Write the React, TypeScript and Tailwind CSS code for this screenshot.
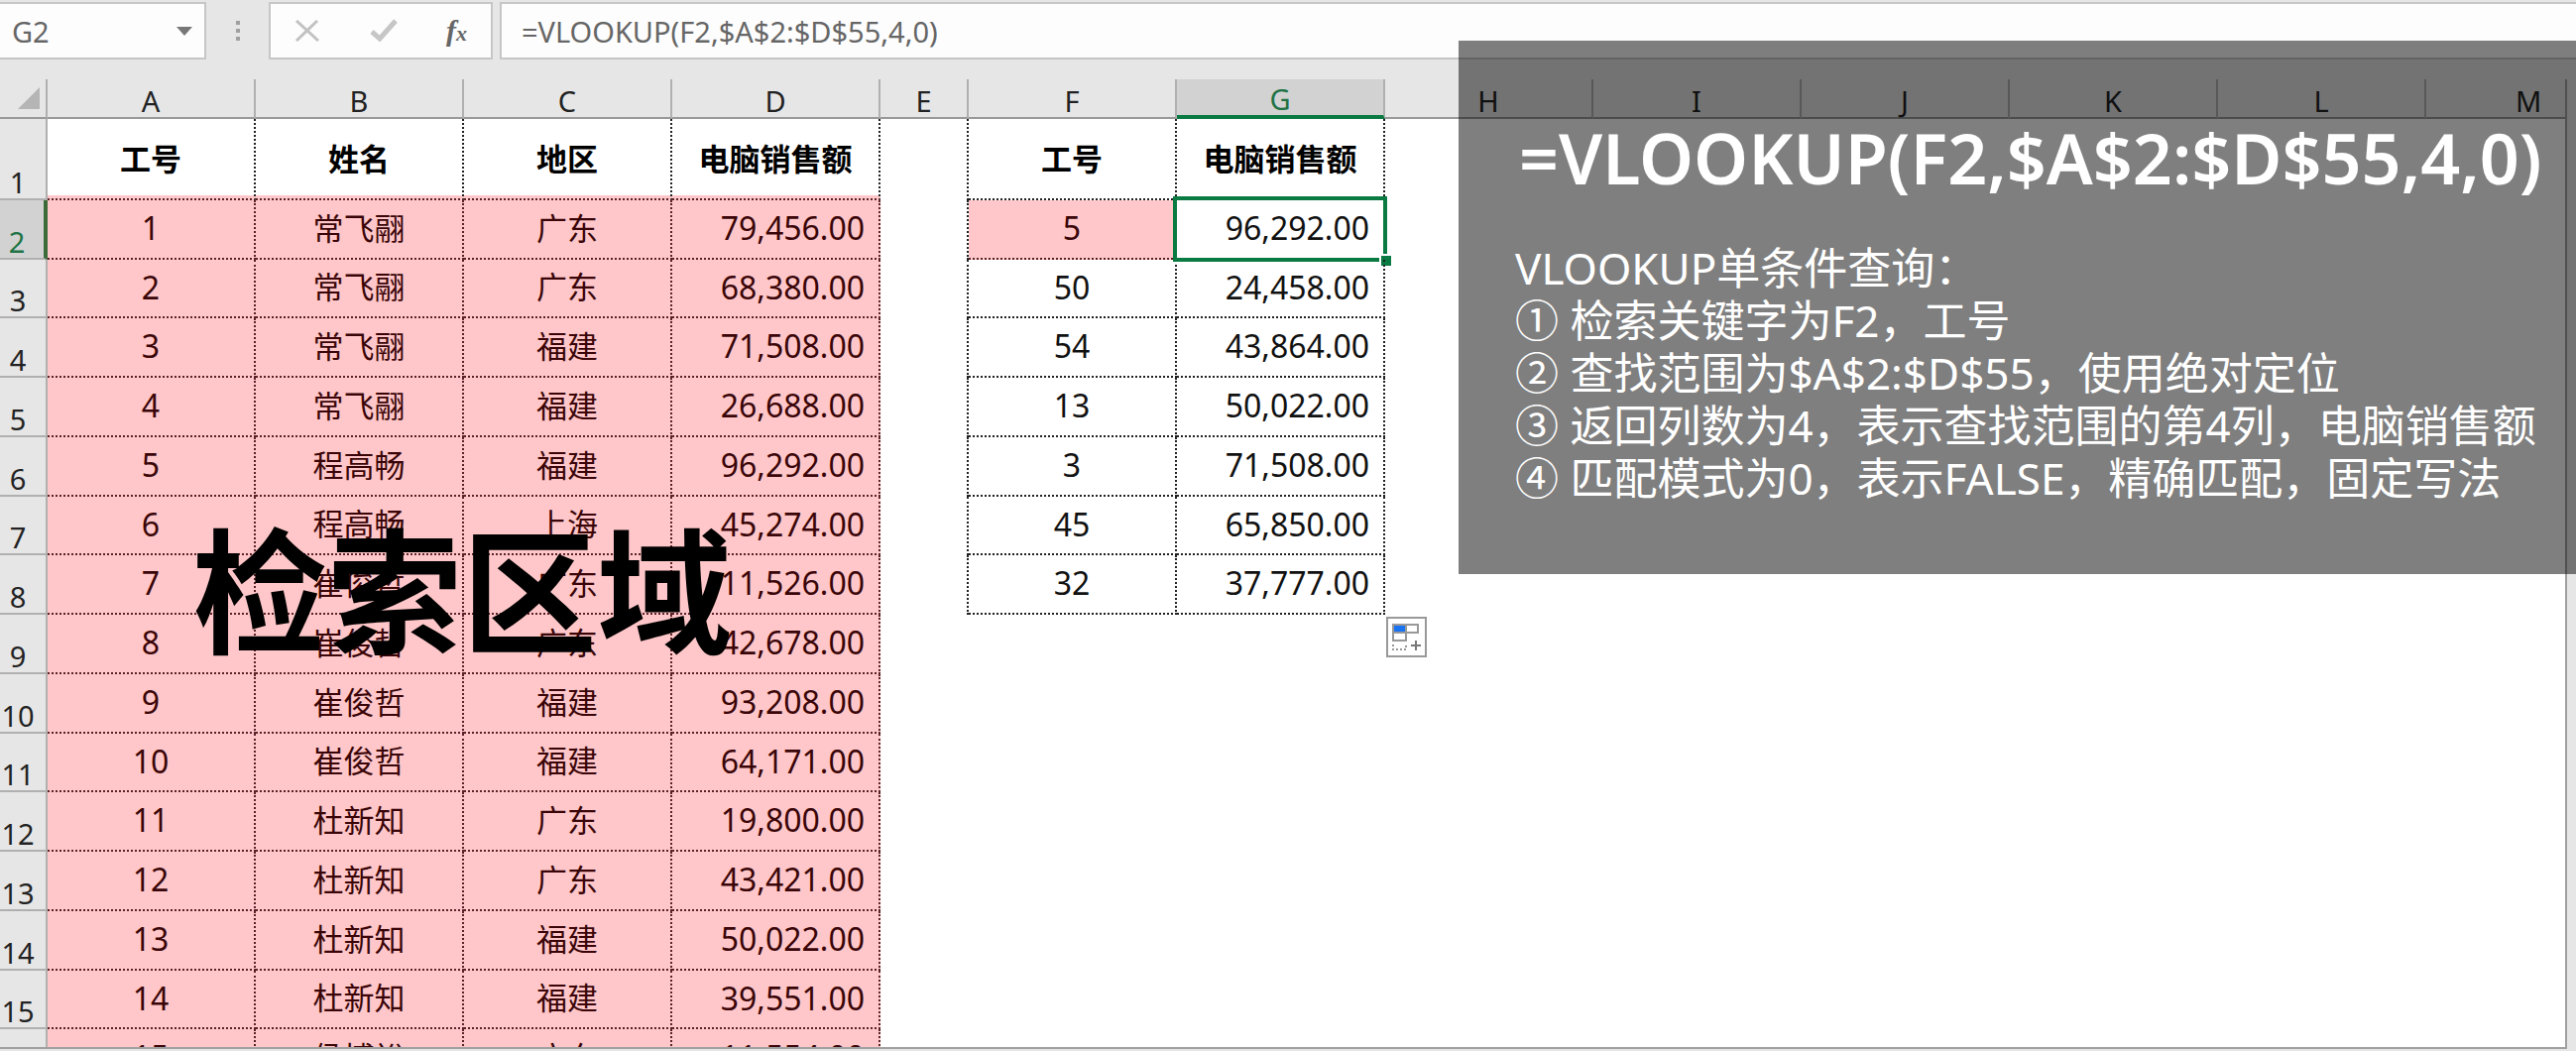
import React from "react";

type Row = { id: string; name: string; area: string; amount: string; key?: string; result?: string };

const rows: Row[] = [
  { id: "1", name: "常飞翮", area: "广东", amount: "79,456.00", key: "5", result: "96,292.00" },
  { id: "2", name: "常飞翮", area: "广东", amount: "68,380.00", key: "50", result: "24,458.00" },
  { id: "3", name: "常飞翮", area: "福建", amount: "71,508.00", key: "54", result: "43,864.00" },
  { id: "4", name: "常飞翮", area: "福建", amount: "26,688.00", key: "13", result: "50,022.00" },
  { id: "5", name: "程高畅", area: "福建", amount: "96,292.00", key: "3", result: "71,508.00" },
  { id: "6", name: "程高畅", area: "上海", amount: "45,274.00", key: "45", result: "65,850.00" },
  { id: "7", name: "崔俊哲", area: "广东", amount: "11,526.00", key: "32", result: "37,777.00" },
  { id: "8", name: "崔俊哲", area: "广东", amount: "42,678.00" },
  { id: "9", name: "崔俊哲", area: "福建", amount: "93,208.00" },
  { id: "10", name: "崔俊哲", area: "福建", amount: "64,171.00" },
  { id: "11", name: "杜新知", area: "广东", amount: "19,800.00" },
  { id: "12", name: "杜新知", area: "广东", amount: "43,421.00" },
  { id: "13", name: "杜新知", area: "福建", amount: "50,022.00" },
  { id: "14", name: "杜新知", area: "福建", amount: "39,551.00" },
  { id: "15", name: "侯博裕", area: "广东", amount: "11,554.00" },
];

const columns = ["A", "B", "C", "D", "E", "F", "G", "H", "I", "J", "K", "L"];

const dotRight = "border-r-2 border-dotted border-r-[#222]";
const pink = "bg-[#ffc7c9] text-[#3a0508]";
const pinkCell = "border-r-2 border-b-2 border-dotted border-[#5a2226] p-0 pb-[2px] text-center";
const plainCell = "border-r-2 border-b-2 border-dotted border-[#222] p-0 pb-[2px] text-center text-[#111]";

function FormulaBar() {
  return (
    <div className="flex h-[60px] items-stretch pt-[2px]">
      <div className="flex w-[208px] items-center border-2 border-l-0 border-[#c6c6c6] bg-[#fdfdfd] pr-3 pl-3">
        <input
          aria-label="Name box"
          defaultValue="G2"
          className="w-full min-w-0 bg-transparent text-[29px] leading-none text-[#666] outline-none"
        />
        <svg width="16" height="9" viewBox="0 0 16 9" className="shrink-0">
          <path d="M0 0H16L8 9Z" fill="#777" />
        </svg>
      </div>
      <div className="flex w-[63px] items-center justify-center">
        <svg width="4" height="21" viewBox="0 0 4 21" fill="#a0a0a0">
          <rect width="4" height="4" />
          <rect y="8" width="4" height="4" />
          <rect y="16" width="4" height="4" />
        </svg>
      </div>
      <div className="flex w-[226px] items-center justify-between border-2 border-[#c6c6c6] bg-[#fdfdfd] px-6">
        <button aria-label="Cancel">
          <svg width="26" height="22" viewBox="0 0 26 22" fill="none" stroke="#c2c2c2" strokeWidth="3">
            <path d="M2 1L24 21M23 1L2 21" />
          </svg>
        </button>
        <button aria-label="Enter">
          <svg width="28" height="24" viewBox="0 0 28 24" fill="none" stroke="#c6c6c6" strokeWidth="5">
            <path d="M2 13L10 20L26 2" />
          </svg>
        </button>
        <button
          aria-label="Insert function"
          className="font-['Liberation_Serif',serif] text-[30px] leading-none font-bold text-[#666] italic"
        >
          f<span className="text-[22px]">x</span>
        </button>
      </div>
      <div className="ml-[7px] flex min-w-0 flex-1 items-center border-2 border-r-0 border-[#c6c6c6] bg-[#fdfdfd] pl-5">
        <input
          aria-label="Formula"
          defaultValue="=VLOOKUP(F2,$A$2:$D$55,4,0)"
          className="w-full bg-transparent text-[29px] leading-none text-[#666] outline-none"
        />
      </div>
    </div>
  );
}

function Sheet() {
  return (
    <table className="w-full table-fixed border-separate border-spacing-0 bg-white">
      <colgroup>
        <col className="w-[48px]" />
        {columns.map((c) => (
          <col key={c} className={c === "E" ? "w-[89px]" : "w-[210px]"} />
        ))}
        <col />
      </colgroup>
      <thead>
        <tr className="h-[40px] bg-[#e6e6e6] text-[29px] leading-[33px] text-[#222]">
          <th className="border-r-2 border-b-2 border-r-[#b0b0b0] border-b-[#999] p-0">
            <svg width="22" height="22" viewBox="0 0 22 22" className="mr-[6px] ml-auto">
              <path d="M22 0V22H0Z" fill="#b5b5b5" />
            </svg>
          </th>
          {columns.map((c) => (
            <th
              key={c}
              className={
                c === "G"
                  ? "border-r-2 border-b-4 border-r-[#b0b0b0] border-b-[#0a7a43] bg-[#d2d2d2] p-0 pt-[2px] font-normal text-[#217346]"
                  : "border-r-2 border-b-2 border-r-[#b0b0b0] border-b-[#999] p-0 pt-1 font-normal"
              }
            >
              {c}
            </th>
          ))}
          <th className="border-b-2 border-b-[#999] p-0 pt-1 pl-[90px] text-left font-normal">M</th>
        </tr>
      </thead>
      <tbody className="text-[32px]">
        <tr className="h-[82px] text-[31px] text-black">
          <RowHead n={1} />
          {["工号", "姓名", "地区", "电脑销售额"].map((t) => (
            <th
              key={t}
              className={
                "border-b-2 border-b-[#5a2226] bg-[linear-gradient(to_top,#ffc7c9_5px,transparent_5px)] bg-origin-border p-0 " + dotRight
              }
            >
              {t}
            </th>
          ))}
          <td className={dotRight} />
          <th className="border-r-2 border-b-2 border-dotted border-[#222] p-0">工号</th>
          <th className="border-r-2 border-b-2 border-dotted border-[#222] p-0">电脑销售额</th>
        </tr>
        {rows.map((r, i) => (
          <tr key={r.id} className={i % 4 === 1 ? "h-[59px]" : "h-[60px]"}>
            <RowHead n={i + 2} />
            <td className={pinkCell + " " + pink}>{r.id}</td>
            <td className={pinkCell + " text-[31px] " + pink}>{r.name}</td>
            <td className={pinkCell + " text-[31px] " + pink}>{r.area}</td>
            <td className={"border-r-2 border-b-2 border-dotted border-[#5a2226] p-0 pr-[14px] pb-[2px] text-right " + pink}>{r.amount}</td>
            {r.key ? (
              <>
                <td className={dotRight} />
                <td className={i === 0 ? pinkCell + " " + pink : plainCell}>{r.key}</td>
                <td className="relative border-r-2 border-b-2 border-dotted border-[#222] p-0 pr-[14px] pb-[2px] text-right text-[#111]">
                  {r.result}
                  {i === 0 && (
                    <div className="absolute -inset-x-1 -inset-y-1 border-4 border-[#0a7a43]">
                      <span className="absolute -right-2 -bottom-2 size-3 border-t-2 border-l-2 border-white bg-[#0a7a43]" />
                    </div>
                  )}
                </td>
              </>
            ) : null}
          </tr>
        ))}
      </tbody>
    </table>
  );
}

function RowHead({ n }: { n: number }) {
  const active = n === 2;
  return (
    <th
      className={
        active
          ? "border-r-4 border-b-2 border-r-[#3c6b3a] border-b-[#b0b0b0] bg-[#d2d2d2] p-0 align-bottom text-[29px] font-normal text-[#217346]"
          : "border-r-2 border-b-2 border-r-[#b0b0b0] border-b-[#b0b0b0] bg-[#e6e6e6] p-0 align-bottom text-[29px] font-normal text-[#222]"
      }
    >
      <div className="pr-2.5 leading-[32px]">{n}</div>
    </th>
  );
}

function Notes() {
  return (
    <aside className="absolute top-[41px] right-0 left-[1471px] h-[538px] overflow-hidden bg-black/50 pl-[57px] text-white">
      <h1 className="mt-[73px] pl-1 text-[70px] leading-[90px] font-semibold whitespace-nowrap">=VLOOKUP(F2,$A$2:$D$55,4,0)</h1>
      <div className="mt-10 text-[44px] leading-[53px] whitespace-nowrap">
        <p>VLOOKUP单条件查询：</p>
        <p>① 检索关键字为F2，工号</p>
        <p>② 查找范围为$A$2:$D$55，使用绝对定位</p>
        <p>③ 返回列数为4，表示查找范围的第4列，电脑销售额</p>
        <p>④ 匹配模式为0，表示FALSE，精确匹配，固定写法</p>
      </div>
    </aside>
  );
}

export default function App() {
  return (
    <div lang="zh-CN" className="relative flex h-screen flex-col overflow-hidden bg-[#e6e6e6] font-['Noto_Sans','Noto_Sans_CJK_SC',sans-serif]">
      <FormulaBar />
      <main className="relative mt-5 mr-[9px] mb-[2px] min-h-0 flex-1 overflow-hidden border-r-2 border-b-2 border-[#a0a0a0] bg-white">
        <Sheet />
        <div className="absolute top-[437px] left-[194px] text-[136px] leading-[160px] font-bold whitespace-nowrap text-black">检索区域</div>
        <button aria-label="Auto fill options" className="absolute top-[542px] left-[1398px] border-2 border-[#999] bg-white">
          <svg width="37" height="37" viewBox="0 0 37 37" fill="none" stroke="#999" strokeWidth="2">
            <path d="M5 6H30V14H5ZM5 14H18V22H5ZM18 6V14" />
            <rect x="6" y="7" width="11" height="6" fill="#1a73f0" stroke="none" />
            <path d="M5 26V31H18V25" strokeDasharray="2 2" />
            <path d="M28 22V32M23 27H33" stroke="#777" />
          </svg>
        </button>
      </main>
      <Notes />
    </div>
  );
}
